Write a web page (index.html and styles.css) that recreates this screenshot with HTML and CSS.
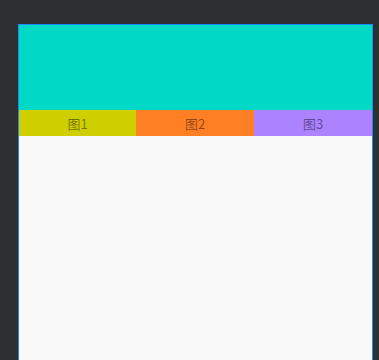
FILE: index.html
```html
<!DOCTYPE html>
<html lang="zh">
<head>
  <meta charset="UTF-8" />
  <meta name="viewport" content="width=device-width, initial-scale=1.0"/>
  <title>图</title>
  <link rel="stylesheet" href="styles.css">
</head>
<body>
  <div class="frame">
    <div class="banner"></div>
    <div class="tabs">
      <div class="tab tab1">图1</div>
      <div class="tab tab2">图2</div>
      <div class="tab tab3">图3</div>
    </div>
    <div class="content"></div>
  </div>
</body>
</html>
```

FILE: styles.css
```css
html, body { margin: 0; height: 100%; }
body { background: #2e2f31; padding: 24px 6px 0 18px; box-sizing: border-box; display: flex; flex-direction: column; font-family: "Noto Sans CJK SC", "Noto Sans", sans-serif; }
.frame { flex: 1; width: 353px; border: 1px solid #1a8cff; border-bottom: none; background: #f9f9f9; display: flex; flex-direction: column; }
.banner { height: 85px; background: #00d9c5; }
.tabs { display: flex; height: 26px; }
.tab { display: flex; align-items: center; justify-content: center; font-size: 13px; color: rgba(0, 0, 0, 0.45); }
.tab1 { width: 117px; background: #cfcf00; }
.tab2 { width: 118px; background: #ff7f24; }
.tab3 { flex: 1; background: #ac82ff; }
.content { flex: 1; }
```
